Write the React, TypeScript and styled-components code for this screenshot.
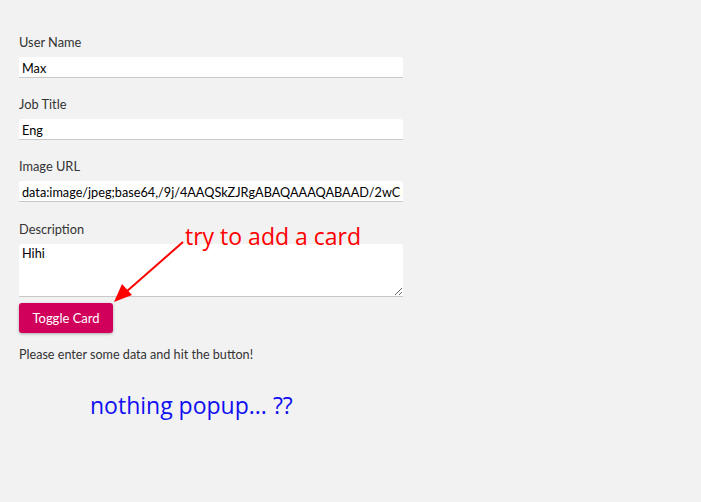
import React from "react";
import styled, { createGlobalStyle } from "styled-components";

const Global = createGlobalStyle`
  html, body { margin: 0; padding: 0; background: #f2f2f2; }
  body { font-family: Lato, "Liberation Sans", sans-serif; }
`;

const Page = styled.div`
  position: relative;
  width: 701px;
  height: 502px;
  background: #f2f2f2;
  padding: 34px 0 0 19px;
  box-sizing: border-box;
`;

const Form = styled.form`
  width: 384px;
  display: flex;
  flex-direction: column;
`;

const Field = styled.div`
  display: flex;
  flex-direction: column;
  margin-bottom: 18px;
`;

const Label = styled.label`
  font-size: 12.8px;
  line-height: 16px;
  color: #333;
  margin-bottom: 7px;
`;

const Input = styled.input`
  font-family: Lato, "Liberation Sans", sans-serif;
  font-size: 12.7px;
  color: #000;
  height: 21px;
  box-sizing: border-box;
  border: none;
  border-bottom: 1px solid #c8c8c8;
  border-radius: 3px 3px 0 0;
  background: #fff;
  padding: 1px 2px 0 3px;
  outline: none;
  width: 100%;
`;

const TextArea = styled.textarea`
  font-family: Lato, "Liberation Sans", sans-serif;
  font-size: 12.7px;
  color: #000;
  height: 53px;
  box-sizing: border-box;
  border: none;
  border-bottom: 1px solid #c8c8c8;
  border-radius: 3px 3px 0 0;
  background: #fff;
  padding: 1px 2px 0 3px;
  outline: none;
  width: 100%;
  resize: vertical;
  display: block;
`;

const DescField = styled(Field)`
  margin-top: 1px;
  margin-bottom: 6px;
`;

const Button = styled.button`
  align-self: flex-start;
  font-family: Lato, "Liberation Sans", sans-serif;
  font-size: 13px;
  color: #fff;
  background: #d1005b;
  border: none;
  border-radius: 3px;
  width: 94px;
  height: 30px;
  padding: 0;
  box-shadow: 0 1px 3px rgba(0, 0, 0, 0.3);
  cursor: pointer;
`;

const Hint = styled.p`
  margin: 14px 0 0;
  font-size: 12.6px;
  color: #333;
`;

const Note = styled.div<{ $color: string; $x: number; $y: number }>`
  position: absolute;
  left: ${(p) => p.$x}px;
  top: ${(p) => p.$y}px;
  font-family: "Open Sans", "DejaVu Sans", sans-serif;
  font-size: 23px;
  line-height: 28px;
  color: ${(p) => p.$color};
  white-space: nowrap;
`;

const Arrow = styled.svg`
  position: absolute;
  left: 0;
  top: 0;
  pointer-events: none;
`;

export default function App() {
  return (
    <>
      <Global />
      <Page>
        <Form onSubmit={(e) => e.preventDefault()}>
          <Field>
            <Label>User Name</Label>
            <Input defaultValue="Max" />
          </Field>
          <Field>
            <Label>Job Title</Label>
            <Input defaultValue="Eng" />
          </Field>
          <Field>
            <Label>Image URL</Label>
            <Input defaultValue="data:image/jpeg;base64,/9j/4AAQSkZJRgABAQAAAQABAAD/2wCEAAkGBxMTEhUTExMWFhUXGBgYGBgYGBgYGBgY" />
          </Field>
          <DescField>
            <Label>Description</Label>
            <TextArea defaultValue="Hihi" />
          </DescField>
          <Button type="button">Toggle Card</Button>
          <Hint>Please enter some data and hit the button!</Hint>
        </Form>
        <Note $color="#ff0000" $x={185} $y={222}>try to add a card</Note>
        <Note $color="#1010f0" $x={90} $y={391}>nothing popup... ??</Note>
        <Arrow width="701" height="502" viewBox="0 0 701 502">
          <line x1="183" y1="242" x2="126" y2="292" stroke="#ff0000" strokeWidth="2" />
          <polygon points="114,302 122,284 132,295" fill="#ff0000" />
        </Arrow>
      </Page>
    </>
  );
}
